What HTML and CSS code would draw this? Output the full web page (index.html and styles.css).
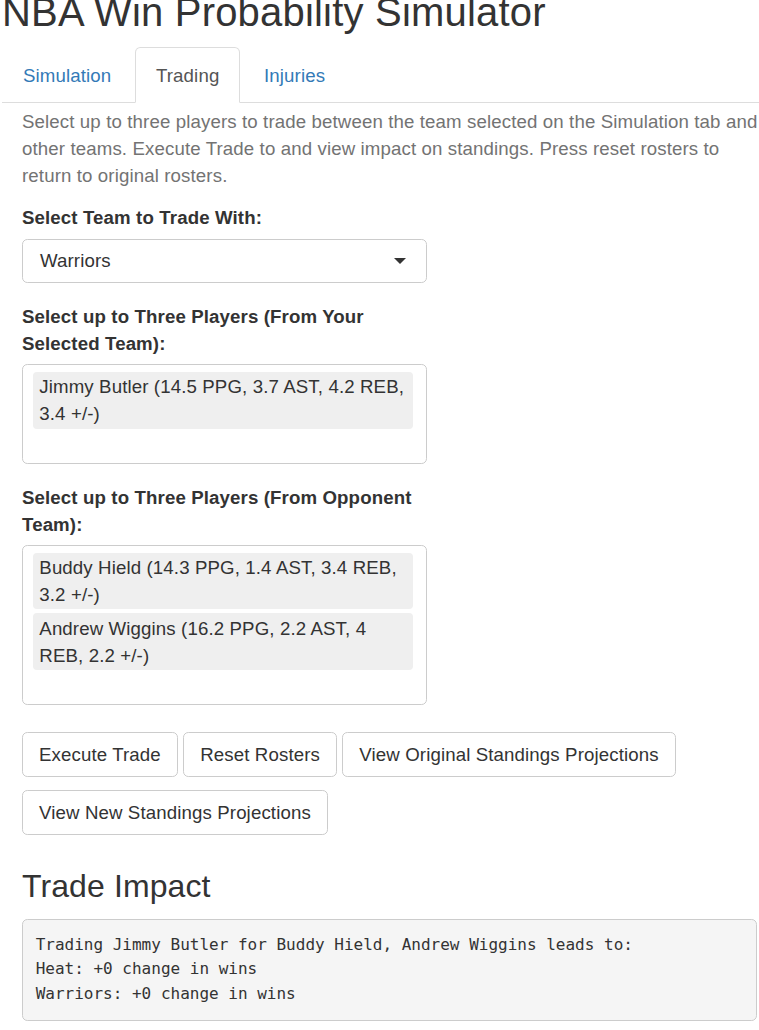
FILE: index.html
```html
<!DOCTYPE html>
<html lang="en">
<head>
<meta charset="utf-8">
<title>NBA Win Probability Simulator</title>
<link rel="stylesheet" href="styles.css">
</head>
<body>
<div class="page">
  <h2 class="title">NBA Win Probability Simulator</h2>
  <ul class="tabs">
    <li class="tab"><a class="tab-link">Simulation</a></li>
    <li class="tab active"><a class="tab-link">Trading</a></li>
    <li class="tab"><a class="tab-link">Injuries</a></li>
  </ul>
  <div class="pane">
    <p class="help">Select up to three players to trade between the team selected on the Simulation tab and other teams. Execute Trade to and view impact on standings. Press reset rosters to return to original rosters.</p>

    <div class="form-group">
      <label class="label">Select Team to Trade With:</label>
      <div class="select">
        <span class="select-value">Warriors</span>
        <span class="caret"></span>
      </div>
    </div>

    <div class="form-group">
      <label class="label">Select up to Three Players (From Your Selected Team):</label>
      <div class="multi">
        <div class="item">Jimmy Butler (14.5 PPG, 3.7 AST, 4.2 REB, 3.4 +/-)</div>
        <div class="multi-input"></div>
      </div>
    </div>

    <div class="form-group">
      <label class="label">Select up to Three Players (From Opponent Team):</label>
      <div class="multi">
        <div class="item">Buddy Hield (14.3 PPG, 1.4 AST, 3.4 REB, 3.2 +/-)</div>
        <div class="item">Andrew Wiggins (16.2 PPG, 2.2 AST, 4 REB, 2.2 +/-)</div>
        <div class="multi-input"></div>
      </div>
    </div>

    <div class="buttons">
      <button class="btn">Execute Trade</button>
      <button class="btn">Reset Rosters</button>
      <button class="btn">View Original Standings Projections</button>
      <button class="btn">View New Standings Projections</button>
    </div>

    <h3 class="section-title">Trade Impact</h3>
    <pre class="output">Trading Jimmy Butler for Buddy Hield, Andrew Wiggins leads to:
Heat: +0 change in wins
Warriors: +0 change in wins</pre>
  </div>
</div>
</body>
</html>
```
FILE: styles.css
```css
* { box-sizing: border-box; }
html, body { margin: 0; padding: 0; background: #fff; }
body {
  font-family: "Liberation Sans", Arial, Helvetica, sans-serif;
  font-size: 18.6667px;
  line-height: 27px;
  letter-spacing: 0.12px;
  color: #333;
  overflow: hidden;
}
.page { padding-left: 2px; }
.title {
  font-size: 40px;
  font-weight: 500;
  line-height: 1.1;
  letter-spacing: 0.2px;
  margin: -10px 0 13.33px 0;
  white-space: nowrap;
}
.tabs {
  list-style: none;
  margin: 0;
  padding: 0;
  display: flex;
  border-bottom: 1.33px solid #ddd;
}
.tab { margin-bottom: -1.33px; margin-right: 2.67px; }
.tab-link {
  display: block;
  padding: 13.33px 20px;
  border: 1.33px solid transparent;
  border-radius: 5.33px 5.33px 0 0;
  color: #337ab7;
  line-height: 27px;
}
.tab.active .tab-link {
  color: #555;
  background: #fff;
  border-color: #ddd #ddd transparent;
}
.pane { padding: 0 0 0 20px; }
.help {
  color: #737373;
  margin: 5.33px 0 15.33px;
}
.form-group { width: 405px; margin-bottom: 20px; }
.label {
  display: block;
  font-weight: 700;
  margin-bottom: 7.5px;
}
.select {
  height: 44px;
  border: 1.33px solid #ccc;
  border-radius: 5.33px;
  padding: 0 20px 0 17px;
  display: flex;
  align-items: center;
  justify-content: space-between;
}
.caret {
  width: 0;
  height: 0;
  border-style: solid;
  border-width: 6.67px 6.67px 0 6.67px;
  border-color: #333 transparent transparent transparent;
}
.multi {
  border: 1.33px solid #ccc;
  border-radius: 5.33px;
  padding: 6.67px 13.33px 2px 9.67px;
}
.item {
  background: #efefef;
  border-radius: 4px;
  padding: 1.33px 6.67px;
  margin-bottom: 4px;
}
.multi-input { height: 28px; }
.buttons {
  display: flex;
  flex-wrap: wrap;
  column-gap: 5.33px;
  row-gap: 13.33px;
  margin-top: 27px;
}
.btn {
  font-family: inherit;
  font-size: 18.6667px;
  letter-spacing: 0.12px;
  line-height: 27px;
  color: #333;
  background: #fff;
  border: 1.33px solid #ccc;
  border-radius: 5.33px;
  padding: 8px 16px;
}
.section-title {
  font-size: 32px;
  font-weight: 500;
  line-height: 1.1;
  letter-spacing: 0.1px;
  margin: 34px 0 14.33px;
}
.output {
  font-family: "DejaVu Sans Mono", "Liberation Mono", monospace;
  font-size: 16px;
  letter-spacing: 0;
  line-height: 24.76px;
  color: #333;
  background: #f5f5f5;
  border: 1.33px solid #ccc;
  border-radius: 5.33px;
  padding: 12.67px;
  margin: 0 2px 13.33px 0;
  white-space: pre;
}
```
